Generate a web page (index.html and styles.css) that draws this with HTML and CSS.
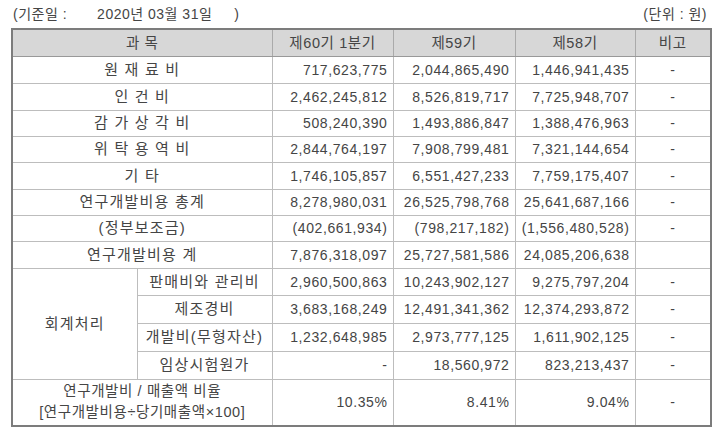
FILE: index.html
```html
<!DOCTYPE html>
<html lang="ko">
<head>
<meta charset="utf-8">
<title>연구개발비용</title>
<link rel="stylesheet" href="styles.css">
</head>
<body>
<div class="page">
  <div class="caption">
    <div class="cap-left"><span>(기준일 :</span><span class="cap-date">2020년 03월 31일</span><span class="cap-close">)</span></div>
    <div class="cap-right">(단위 : 원)</div>
  </div>
  <table class="rd">
    <colgroup>
      <col class="c1"><col class="c2"><col class="c3"><col class="c4"><col class="c5"><col class="c6">
    </colgroup>
    <thead>
      <tr class="r27">
        <th colspan="2">과 목</th>
        <th>제60기 1분기</th>
        <th>제59기</th>
        <th>제58기</th>
        <th>비고</th>
      </tr>
    </thead>
    <tbody>
      <tr class="r27"><td colspan="2" class="lbl">원 재 료 비</td><td class="num">717,623,775</td><td class="num">2,044,865,490</td><td class="num">1,446,941,435</td><td class="dash">-</td></tr>
      <tr class="r27"><td colspan="2" class="lbl">인 건 비</td><td class="num">2,462,245,812</td><td class="num">8,526,819,717</td><td class="num">7,725,948,707</td><td class="dash">-</td></tr>
      <tr class="r26"><td colspan="2" class="lbl">감 가 상 각 비</td><td class="num">508,240,390</td><td class="num">1,493,886,847</td><td class="num">1,388,476,963</td><td class="dash">-</td></tr>
      <tr class="r26"><td colspan="2" class="lbl">위 탁 용 역 비</td><td class="num">2,844,764,197</td><td class="num">7,908,799,481</td><td class="num">7,321,144,654</td><td class="dash">-</td></tr>
      <tr class="r27"><td colspan="2" class="lbl">기 타</td><td class="num">1,746,105,857</td><td class="num">6,551,427,233</td><td class="num">7,759,175,407</td><td class="dash">-</td></tr>
      <tr class="r26"><td colspan="2" class="lbl">연구개발비용 총계</td><td class="num">8,278,980,031</td><td class="num">26,525,798,768</td><td class="num">25,641,687,166</td><td class="dash">-</td></tr>
      <tr class="r26"><td colspan="2" class="lbl">(정부보조금)</td><td class="num">(402,661,934)</td><td class="num">(798,217,182)</td><td class="num">(1,556,480,528)</td><td class="dash">-</td></tr>
      <tr class="r27"><td colspan="2" class="lbl">연구개발비용 계</td><td class="num">7,876,318,097</td><td class="num">25,727,581,586</td><td class="num">24,085,206,638</td><td class="dash"></td></tr>
      <tr class="r27"><td rowspan="4" class="lbl">회계처리</td><td class="lbl">판매비와 관리비</td><td class="num">2,960,500,863</td><td class="num">10,243,902,127</td><td class="num">9,275,797,204</td><td class="dash">-</td></tr>
      <tr class="r28"><td class="lbl">제조경비</td><td class="num">3,683,168,249</td><td class="num">12,491,341,362</td><td class="num">12,374,293,872</td><td class="dash">-</td></tr>
      <tr class="r28"><td class="lbl">개발비(무형자산)</td><td class="num">1,232,648,985</td><td class="num">2,973,777,125</td><td class="num">1,611,902,125</td><td class="dash">-</td></tr>
      <tr class="r28"><td class="lbl">임상시험원가</td><td class="num">-</td><td class="num">18,560,972</td><td class="num">823,213,437</td><td class="dash">-</td></tr>
      <tr class="r47"><td colspan="2" class="lbl two">연구개발비 / 매출액 비율<br>[연구개발비용÷당기매출액×100]</td><td class="num">10.35%</td><td class="num">8.41%</td><td class="num">9.04%</td><td class="dash">-</td></tr>
    </tbody>
  </table>
</div>
</body>
</html>
```
FILE: styles.css
```css
html, body {
  margin: 0;
  padding: 0;
  background: #ffffff;
}
body {
  font-family: "Liberation Sans", "Noto Sans CJK KR", sans-serif;
  color: #454545;
}
.page {
  width: 716px;
}
.caption {
  display: flex;
  justify-content: space-between;
  align-items: center;
  height: 26px;
  padding: 0 9px 2px 13px;
  font-size: 14px;
  letter-spacing: 0.5px;
}
.cap-date {
  margin-left: 30px;
}
.cap-close {
  margin-left: 22px;
}
.rd {
  border-collapse: collapse;
  table-layout: fixed;
  width: 699px;
  margin-left: 11px;
  border: 2px solid #7c7c7c;
  font-size: 14px;
  letter-spacing: 0.6px;
}
.c1 { width: 125px; }
.c2 { width: 135px; }
.c3 { width: 121px; }
.c4 { width: 122px; }
.c5 { width: 120px; }
.c6 { width: 76px; }
.rd th, .rd td {
  border: 1px solid #bdbdbd;
  padding: 0 5px;
  white-space: nowrap;
  line-height: 18px;
}
.rd th {
  background: #d7d7d7;
  font-weight: normal;
  text-align: center;
  border-bottom-color: #999999;
  border-left-color: #aaaaaa;
  border-right-color: #aaaaaa;
}
.rd thead th {
  font-size: 14.5px;
}
.r27 { height: 27px; }
.r26 { height: 26px; }
.r28 { height: 28px; }
.r47 { height: 47px; }
.lbl {
  text-align: center;
  font-size: 15px;
  letter-spacing: 1.2px;
}
.two {
  font-size: 14.5px;
  letter-spacing: 0.6px;
  line-height: 21px !important;
}
.num {
  text-align: right;
}
.dash {
  text-align: center;
}
```
